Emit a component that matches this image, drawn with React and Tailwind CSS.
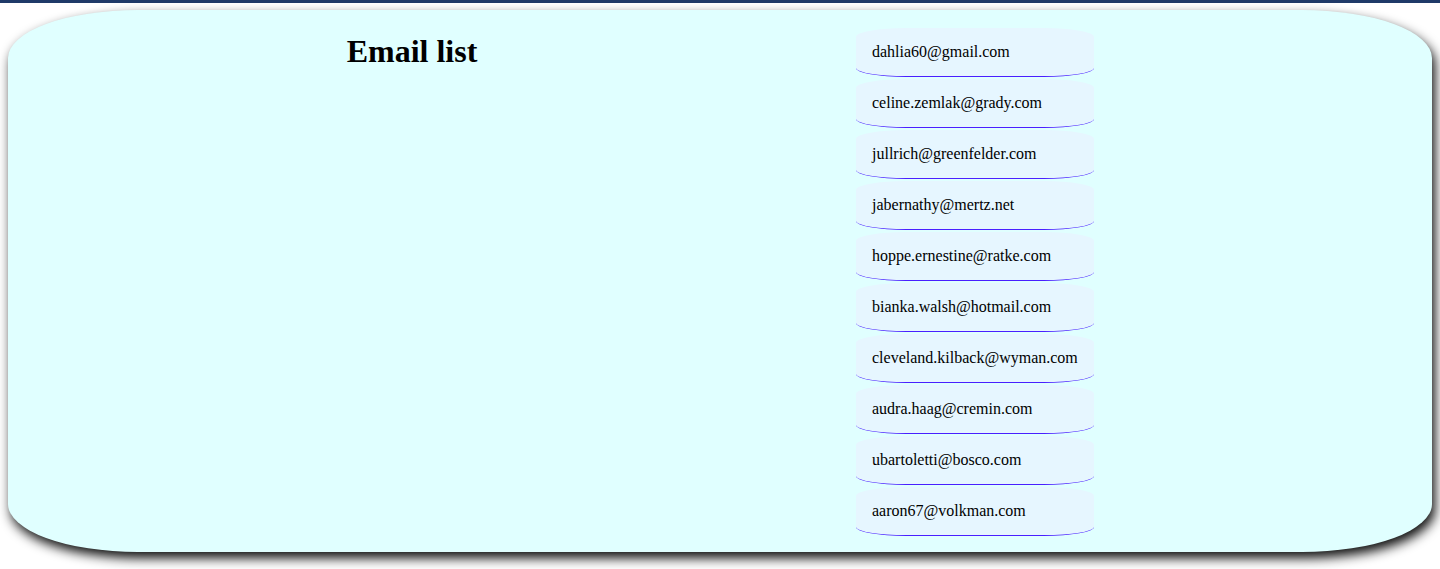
import React from 'react';

const emails = [
  'dahlia60@gmail.com',
  'celine.zemlak@grady.com',
  'jullrich@greenfelder.com',
  'jabernathy@mertz.net',
  'hoppe.ernestine@ratke.com',
  'bianka.walsh@hotmail.com',
  'cleveland.kilback@wyman.com',
  'audra.haag@cremin.com',
  'ubartoletti@bosco.com',
  'aaron67@volkman.com',
];

export default function App() {
  return (
    <div className="min-h-[569px] bg-white font-['Liberation_Serif',serif] text-black">
      <div className="h-[3px] bg-[#1f3a68]" />
      <div className="px-[8px] pt-[7px] pb-[16px]">
        <div className="flex rounded-[130px/48px] bg-[#e0ffff] pt-[18px] pb-[16px] shadow-[3px_6px_12px_rgba(0,0,0,0.95)]">
          <div className="w-[808px] shrink-0 text-center">
            <h1 className="mt-[5px] text-[32px] font-bold leading-[37px]">Email list</h1>
          </div>
          <ul className="ml-[40px] flex w-[238px] flex-col gap-[2px]">
            {emails.map((e) => (
              <li
                key={e}
                className="flex h-[49px] items-center rounded-[50px/9px] border-b border-[#4a1fff] bg-[#e6f6ff] pb-[1px] pl-[16px] text-[16px]"
              >
                {e}
              </li>
            ))}
          </ul>
        </div>
      </div>
    </div>
  );
}
